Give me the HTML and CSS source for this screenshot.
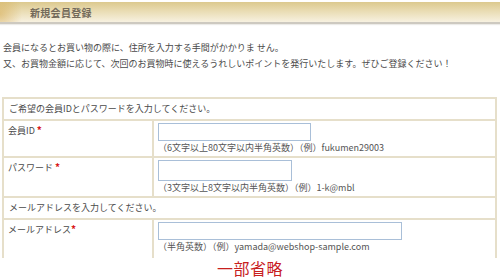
FILE: index.html
```html
<!DOCTYPE html>
<html lang="ja">
<head>
<meta charset="utf-8">
<title>新規会員登録</title>
<link rel="stylesheet" href="styles.css">
</head>
<body>
<div class="page">
  <div class="header"><h1 class="title">新規会員登録</h1></div>
  <div class="intro">
    <p class="intro-line">会員になるとお買い物の際に、住所を入力する手間がかかりま せん。</p>
    <p class="intro-line">又、お買物金額に応じて、次回のお買物時に使えるうれしいポイントを発行いたします。ぜひご登録ください！</p>
  </div>
  <div class="form-clip">
    <table class="form-table">
      <colgroup><col class="col-label"><col class="col-field"></colgroup>
      <tr class="row-section"><td colspan="2">ご希望の会員IDとパスワードを入力してください。</td></tr>
      <tr class="row-field">
        <td class="label">会員ID <span class="req">*</span></td>
        <td class="field"><input class="input input-id" type="text"><div class="hint">（6文字以上80文字以内半角英数）（例）fukumen29003</div></td>
      </tr>
      <tr class="row-field">
        <td class="label">パスワード <span class="req">*</span></td>
        <td class="field"><input class="input input-pw" type="password"><div class="hint">（3文字以上8文字以内半角英数）（例）1-k@mbl</div></td>
      </tr>
      <tr class="row-section"><td colspan="2">メールアドレスを入力してください。</td></tr>
      <tr class="row-field row-last">
        <td class="label">メールアドレス<span class="req">*</span></td>
        <td class="field"><input class="input input-mail" type="text"><div class="hint">（半角英数）（例）yamada@webshop-sample.com</div></td>
      </tr>
    </table>
  </div>
  <p class="note">一部省略</p>
</div>
</body>
</html>
```
FILE: styles.css
```css
* { box-sizing: border-box; }
html, body { margin: 0; padding: 0; background: #fff; }
body {
  font-family: "Noto Sans CJK JP", "Noto Sans", sans-serif;
  font-size: 9px;
  color: #4a4a4a;
  width: 500px;
  height: 280px;
  overflow: hidden;
}
.page { padding-top: 2px; }
.header {
  height: 22px;
  padding-left: 30px;
  background:
    radial-gradient(ellipse 22px 26px at 0 60%, rgba(214,170,80,0.55), rgba(214,170,80,0) 100%),
    linear-gradient(to bottom, #dcc98e 0%, #e9dcb3 45%, #f7f1e0 100%);
  border-bottom: 2px solid #cdc9c0;
  box-shadow: 0 1px 1px #ecebe8;
}
.title {
  margin: 0;
  font-size: 10px;
  line-height: 22px;
  font-weight: bold;
  color: #736a5a;
  letter-spacing: 0.3px;
}
.intro { padding: 16px 0 0 3px; }
.intro-line { margin: 0; line-height: 16px; }
.form-clip {
  margin-top: 25px;
  margin-left: 2px;
  width: 495px;
  height: 161px;
  overflow: hidden;
}
.form-table {
  width: 495px;
  table-layout: fixed;
  border-collapse: collapse;
  border: 2px solid #e6dfca;
}
.col-label { width: 150px; }
.form-table td {
  border: 2px solid #e6dfca;
  padding: 2px 4px;
  vertical-align: top;
  line-height: 14px;
}
.row-section td { padding: 3px 5px; line-height: 14px; }
.label { padding-top: 4px; padding-left: 5px; }
.req { color: #d81818; font-weight: bold; font-size: 10px; }
.field { padding: 3px 2px 4px 2px; }
.row-last .field { padding-bottom: 8px; }
.input {
  display: block;
  height: 18px;
  margin: 0;
  padding: 0 2px;
  border: 1px solid #a9bfd8;
  background: #fff;
  font-size: 9px;
}
.input-id { width: 153px; }
.input-pw { width: 134px; height: 21px; }
.input-mail { width: 244px; }
.hint { margin-top: 1px; line-height: 12px; color: #555; font-size: 9px; }
.note {
  margin: 2px 0 0 0;
  text-align: center;
  color: #c8201e;
  font-size: 16px;
  line-height: 17px;
  letter-spacing: 0.5px;
}
```
